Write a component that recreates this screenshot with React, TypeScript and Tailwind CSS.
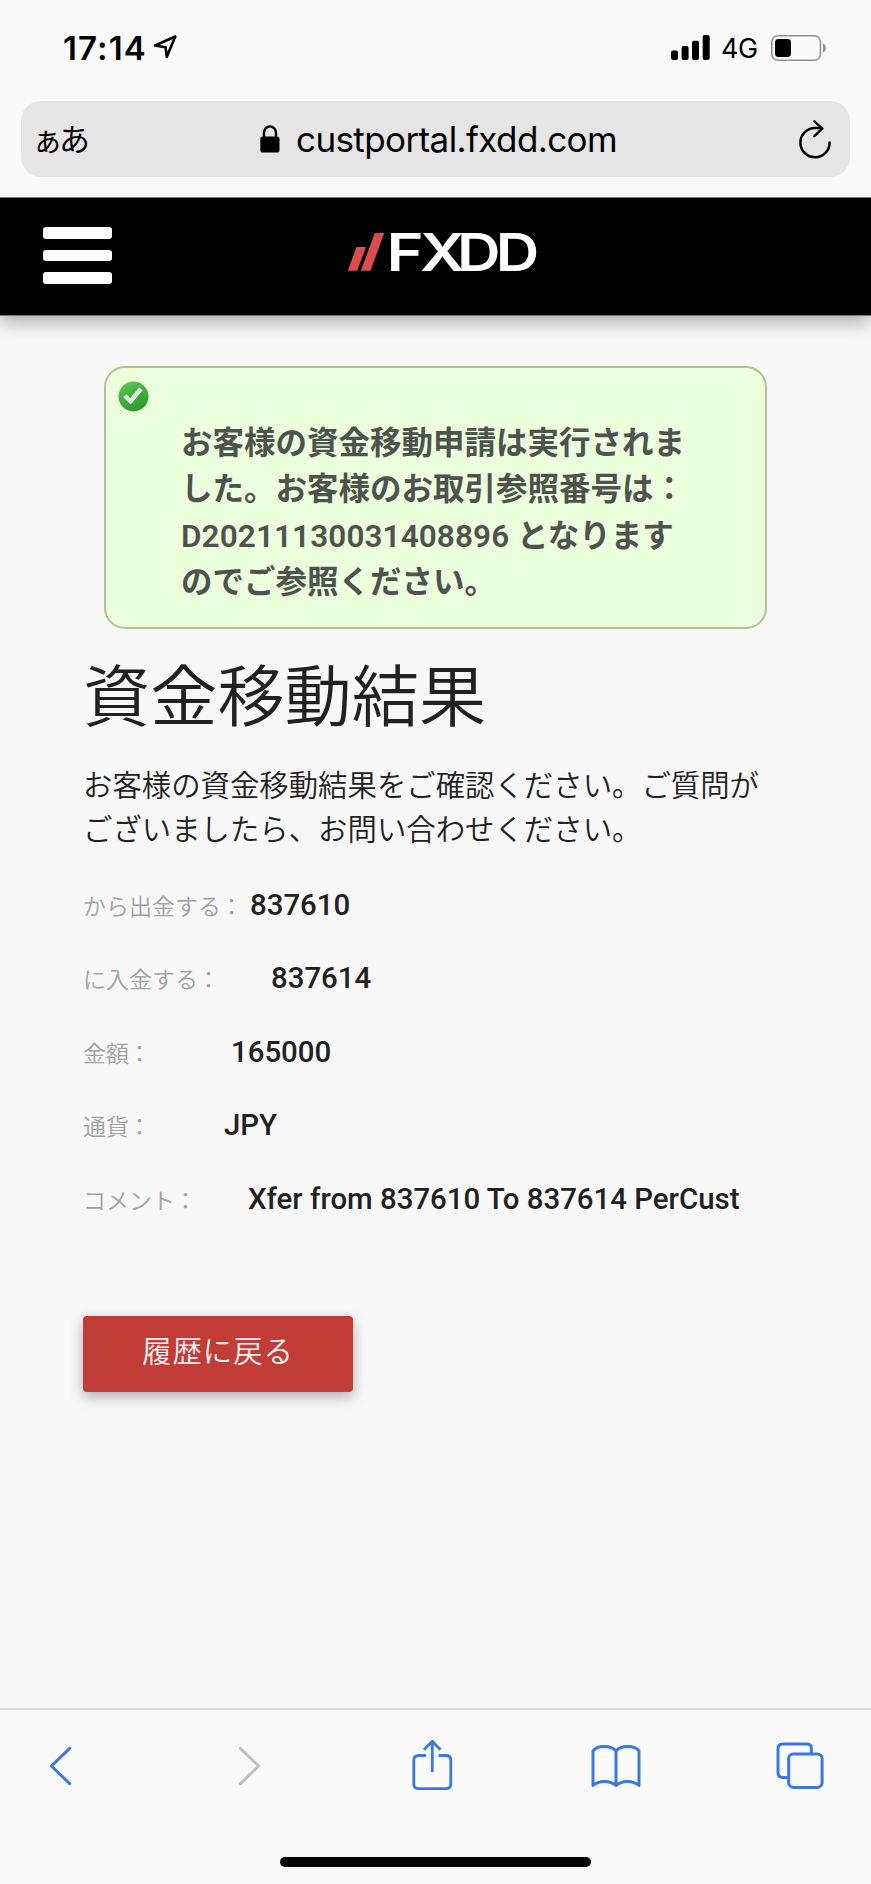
type Detail = {
  label: string
  value: string
  gap: string
}

const details: Detail[] = [
  { label: 'から出金する', value: '837610', gap: 'ml-[6px]' },
  { label: 'に入金する', value: '837614', gap: 'ml-[50px]' },
  { label: '金額', value: '165000', gap: 'ml-[79px]' },
  { label: '通貨', value: 'JPY', gap: 'ml-[72px]' },
  { label: 'コメント', value: 'Xfer from 837610 To 837614 PerCust', gap: 'ml-[50px]' }
]

function StatusBar() {
  return (
    <div className="flex h-[101px] items-start justify-between pl-[63px] pr-[44px] pt-[28px] text-black">
      <div className="flex h-10 items-center">
        <span className="w-[84px] whitespace-nowrap text-[33px] font-semibold leading-10 tracking-[1.1px]">17:14</span>
        <svg className="ml-[6px] -mt-[2px] h-6 w-6" viewBox="0 0 24 24" fill="none" stroke="currentColor" strokeWidth="2.6" strokeLinejoin="round">
          <path d="M22.3 1.5 13.8 21.8 12.5 12.2 2 10.5Z" />
        </svg>
      </div>
      <div className="flex h-10 items-center">
        <svg className="-mt-[1px] h-[25px] w-[39px]" viewBox="0 0 39 25" fill="currentColor">
          <rect x="0" y="15.5" width="7" height="9.5" rx="2" />
          <rect x="10.6" y="11" width="7" height="14" rx="2" />
          <rect x="21" y="5.7" width="7" height="19.3" rx="2" />
          <rect x="31.7" y="0" width="7" height="25" rx="2" />
        </svg>
        <span className="ml-[11px] mr-[1px] w-[38px] whitespace-nowrap pt-[2px] text-[27px] leading-10 tracking-[-0.5px]">4G</span>
        <svg className="-mt-[1px] ml-[11px] h-[26px] w-[56px]" viewBox="0 0 56 26" fill="none">
          <rect x="0.8" y="0.8" width="48.6" height="24.4" rx="6" stroke="#929292" strokeWidth="1.6" />
          <rect x="4" y="4" width="16" height="18" rx="3.4" fill="#000" />
          <path d="M52 8.5c3.8 1.4 3.8 7.6 0 9Z" fill="#929292" />
        </svg>
      </div>
    </div>
  )
}

function AddressBar() {
  return (
    <div className="mx-[21px] flex h-[76px] items-center rounded-[20px] bg-[#e5e5e5] text-black">
      <div className="w-[239px] pb-[2px] pl-[11px] font-['Noto_Sans_CJK_JP',sans-serif] text-[31px] leading-10 tracking-[-4px]">
        ぁあ
      </div>
      <svg className="h-[28px] w-[20px]" viewBox="0 0 20 28">
        <path d="M4 13V8a6 6.6 0 0 1 12 0v5" fill="none" stroke="#000" strokeWidth="2.4" />
        <rect x="0.3" y="11.5" width="19.2" height="16" rx="2.6" fill="#000" />
      </svg>
      <span className="ml-[16px] w-[324px] whitespace-nowrap text-[35px] leading-[38px] pb-px tracking-[-0.6px]">custportal.fxdd.com</span>
      <svg className="ml-auto mr-[18px] h-[40px] w-[34px]" viewBox="0 0 34 40" fill="none" stroke="#000" strokeWidth="2.5" strokeLinecap="round" strokeLinejoin="round">
        <path d="M31.6 23.4A14.6 14.6 0 1 1 17 9h7" />
        <path d="M16.3 2.4 24.3 9.6 16.3 17.2" />
      </svg>
    </div>
  )
}

function SiteHeader() {
  return (
    <header className="mt-5 flex h-[119px] items-start border-y border-[#777] bg-black shadow-[0_6px_18px_rgba(0,0,0,0.32)]">
      <button className="ml-[43px] mt-[29px] flex flex-col gap-[11px]">
        <span className="h-[11.7px] w-[69px] rounded-[3px] bg-white" />
        <span className="h-[11.7px] w-[69px] rounded-[3px] bg-white" />
        <span className="h-[11.7px] w-[69px] rounded-[3px] bg-white" />
      </button>
      <svg className="ml-[234.5px] mt-[13px] h-[80px] w-[200px]" viewBox="0 0 200 80">
        <path d="M0.8 59.8 9.5 36.1H19L10.2 59.8Z" fill="#dc4c4c" />
        <path d="M13.8 59.8 27.8 22.1H37.3L23.4 59.8Z" fill="#dc4c4c" />
        <g fill="#fff" className="font-['Inter',sans-serif] text-[51.8px] font-semibold">
          <text x="39.6" y="59.8" textLength="37" lengthAdjust="spacingAndGlyphs">F</text>
          <text x="73" y="59.8" textLength="45" lengthAdjust="spacingAndGlyphs">X</text>
          <text x="110" y="59.8" textLength="43.5" lengthAdjust="spacingAndGlyphs">D</text>
          <text x="148.8" y="59.8" textLength="43.5" lengthAdjust="spacingAndGlyphs">D</text>
        </g>
      </svg>
    </header>
  )
}

function SuccessNotice() {
  return (
    <div className="ml-[21px] mt-[50px] flex h-[263px] w-[663px] items-start rounded-[21px] border-2 border-[#afc496] bg-[#ebffdc]">
      <svg className="ml-[12px] mt-[13px] h-[31px] w-[31px] shrink-0" viewBox="0 0 31 31">
        <defs>
          <linearGradient id="ok" x1="0" y1="0" x2="0.5" y2="1">
            <stop offset="0" stopColor="#65cf5c" />
            <stop offset="0.5" stopColor="#45b043" />
            <stop offset="1" stopColor="#2f9c2c" />
          </linearGradient>
        </defs>
        <circle cx="15.5" cy="15.5" r="15" fill="url(#ok)" />
        <path d="M5 16 8.8 13.2 12.2 17.3 21 6.3 24.7 9.2 12.8 23.5Z" fill="#e2ece2" />
      </svg>
      <p className="ml-[32px] mt-[53px] whitespace-nowrap text-[31.5px] font-bold leading-[46.3px] text-[#505250]">
        お客様の資金移動申請は実行されま<br />
        した。お客様のお取引参照番号は：<br />
        <span className="font-semibold tracking-[0.1px]">D20211130031408896</span> となります<br />
        のでご参照ください。
      </p>
    </div>
  )
}

function Toolbar() {
  return (
    <footer className="flex h-[176px] flex-col border-t-2 border-[#dadada] bg-[#fafafa] text-[#3b78e3]">
      <div className="flex h-[112px] items-center pl-[48px]">
        <svg className="h-[40px] w-[26px]" viewBox="0 0 26 40" fill="none" stroke="currentColor" strokeWidth="3" strokeLinecap="round" strokeLinejoin="round">
          <path d="M21.7 2.3 3.4 20 21.7 37.7" />
        </svg>
        <svg className="ml-[163px] h-[40px] w-[26px]" viewBox="0 0 26 40" fill="none" stroke="#c0c0c0" strokeWidth="3" strokeLinecap="round" strokeLinejoin="round">
          <path d="M3.3 2.3 21.6 20 3.3 37.7" />
        </svg>
        <svg className="-mt-[3px] ml-[149px] h-[52px] w-[41px]" viewBox="0 0 41 52" fill="none" stroke="currentColor" strokeWidth="2.8" strokeLinecap="butt" strokeLinejoin="round">
          <path d="M14 16.5H6.5Q1.8 16.5 1.8 21V45Q1.8 49.6 6.5 49.6H34Q38.8 49.6 38.8 45V21Q38.8 16.5 34 16.5H26.5" />
          <path d="M20.3 33V2.5M12 10.7 20.3 2.2 28.5 10.7" />
        </svg>
        <svg className="ml-[138px] h-[44px] w-[50px]" viewBox="0 0 50 44" fill="none" stroke="currentColor" strokeWidth="3" strokeLinecap="round" strokeLinejoin="round">
          <path d="M25 7C20 1 6 1 2 7V41.5C8 36 19 36 25 41.5C31 36 42 36 48 41.5V7C44 1 30 1 25 7V41.5" />
        </svg>
        <svg className="ml-[135px] h-[48px] w-[48px]" viewBox="0 0 48 48" fill="none" stroke="currentColor" strokeWidth="3">
          <rect x="12.7" y="12" width="33.4" height="33.4" rx="4.6" />
          <path d="M12.7 35.4H6.8Q2 35.4 2 30.8V6.6Q2 2 6.8 2H31Q35.4 2 35.4 6.6V12" />
        </svg>
      </div>
      <div className="ml-[280px] mt-[34.5px] h-[10.5px] w-[311px] rounded-full bg-black" />
    </footer>
  )
}

export default function App() {
  return (
    <div className="flex h-[1884px] w-[871px] flex-col overflow-hidden bg-[#f8f8f8] font-['Roboto','Noto_Sans_CJK_JP',sans-serif]">
      <div className="relative z-10 -mb-5 bg-[#fafafa] pb-5 font-['Inter',sans-serif]">
        <StatusBar />
        <AddressBar />
      </div>
      <SiteHeader />

      <main className="flex flex-1 flex-col items-start pl-[83px] text-[#212121]">
        <SuccessNotice />
        <h1 className="mt-[29px] text-[67.2px] font-[350] leading-[80px]">資金移動結果</h1>
        <p className="mt-[26px] whitespace-nowrap text-[29.4px] font-[350] leading-[44px]">
          お客様の資金移動結果をご確認ください。ご質問が<br />
          ございましたら、お問い合わせください。
        </p>
        <dl className="mt-[16.5px]">
          {details.map((d) => (
            <div key={d.label} className="flex h-[73.5px] items-baseline whitespace-nowrap leading-[73.5px]">
              <dt className="text-[23px] font-[350] text-[#a2a2a2]">
                {d.label}<span className="relative -left-[1px]">：</span>
              </dt>
              <dd className={`text-[29.4px] font-medium ${d.gap}`}>{d.value}</dd>
            </div>
          ))}
        </dl>
        <button className="mt-[79.5px] flex h-[76px] w-[270px] justify-center rounded-[4px] bg-[#c13b37] text-[29.4px] font-[350] leading-[72px] tracking-[1px] text-[#fff3f1] shadow-[0_5px_14px_rgba(0,0,0,0.3)]">
          履歴に戻る
        </button>
      </main>

      <Toolbar />
    </div>
  )
}
